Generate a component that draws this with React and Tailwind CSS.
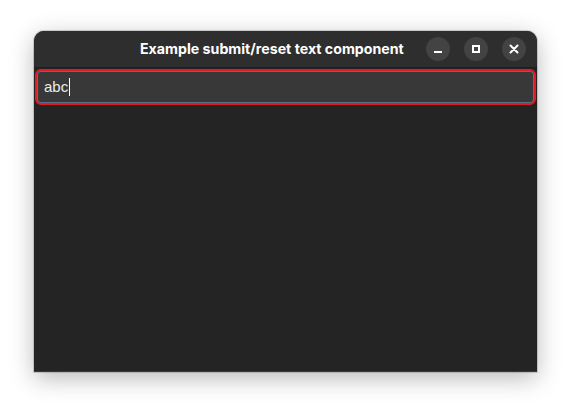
export default function App() {
  return (
    <div className="h-[409px] w-[571px] bg-white pt-[31px] pl-[34px]" style={{ fontFamily: '"Liberation Sans", Arial, sans-serif' }}>
      <div className="flex h-[341px] w-[503px] flex-col overflow-hidden rounded-t-[10px] border-b border-[#3a3a3a] bg-[#242424] shadow-[0_6px_24px_rgba(0,0,0,0.28),0_0_0_1px_rgba(0,0,0,0.15)]">
        {/* header bar */}
        <div className="flex h-[37px] shrink-0 items-center border-b border-[#1e1e1e] bg-[#2e2e2e] pl-[106px] pr-[11px]">
          <div className="flex-1 whitespace-nowrap text-[14.2px] font-bold text-white" style={{ fontFamily: 'Inter, "Liberation Sans", sans-serif' }}>
            Example submit/reset text component
          </div>
          <div className="flex gap-[14px]">
            <button className="flex h-6 w-6 items-center justify-center rounded-full bg-[#434343]">
              <span className="mt-[5px] block h-[2px] w-[8px] bg-white" />
            </button>
            <button className="flex h-6 w-6 items-center justify-center rounded-full bg-[#434343]">
              <span className="block h-[8px] w-[8px] border-2 border-white" />
            </button>
            <button className="flex h-6 w-6 items-center justify-center rounded-full bg-[#434343]">
              <svg width="10" height="10" viewBox="0 0 10 10">
                <path d="M1.5 1.5 L8.5 8.5 M8.5 1.5 L1.5 8.5" stroke="white" strokeWidth="2" strokeLinecap="round" />
              </svg>
            </button>
          </div>
        </div>
        {/* text entry */}
        <div className="px-[1px] pt-[1px]">
          <div className="flex h-[36px] items-center rounded-[6px] border-2 border-[#e01b24] bg-[#383838] px-[7px] shadow-[inset_0_0_0_1px_#5c6d87]">
            <span className="text-[15px] text-[#ececec]">abc</span>
            <span className="ml-[1px] block h-[18px] w-px bg-white" />
          </div>
        </div>
        <div className="flex-1" />
      </div>
    </div>
  );
}
